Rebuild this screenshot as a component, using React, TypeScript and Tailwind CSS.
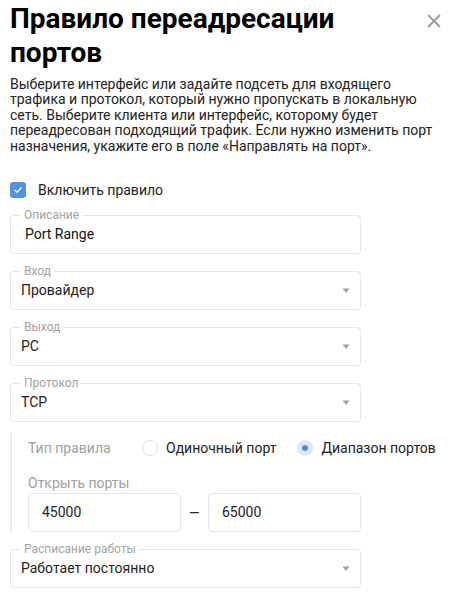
import React from 'react';

const SelectField = ({ label, value }: { label: string; value: string }) => (
  <div className="relative h-[39px] w-[351px] rounded-[4px] border border-[#e6e6e6] flex items-center pl-[10px] pr-[10px]">
    <span className="absolute left-[10px] top-[-8px] bg-white px-[3px] text-[12px] leading-[14px] text-[#a3a3a3]">{label}</span>
    <span className="flex-1 text-[14px] text-[#222]">{value}</span>
    <svg width="8" height="6" viewBox="0 0 8 6">
      <path d="M0.5 0.5 H7.5 L4 5 Z" fill="#a0a0a0" />
    </svg>
  </div>
);

const App = () => (
  <div className="w-[452px] h-[598px] bg-white overflow-hidden font-['Roboto',sans-serif] text-[#222] px-[10px] pt-[2px]">
    {/* Header */}
    <div className="flex items-start justify-between">
      <h1 className="text-[28px] leading-[34px] font-bold text-black">
        Правило переадресации
        <br />
        портов
      </h1>
      <button className="mt-[11px] text-[#9a9a9a]">
        <svg width="16" height="16" viewBox="0 0 16 16">
          <path d="M2 2 L14 14 M14 2 L2 14" stroke="currentColor" strokeWidth="1.8" />
        </svg>
      </button>
    </div>

    <p className="mt-[7px] text-[14px] leading-[15.4px] text-[#222]">
      Выберите интерфейс или задайте подсеть для входящего трафика и протокол, который нужно пропускать в локальную сеть. Выберите клиента или интерфейс, которому будет переадресован подходящий трафик. Если нужно изменить порт назначения, укажите его в поле «Направлять на порт».
    </p>

    {/* Enable */}
    <label className="mt-[26px] flex items-center h-[20px] gap-[12px]">
      <span className="w-[16px] h-[16px] rounded-[3px] bg-[#5294e2] flex items-center justify-center">
        <svg width="10" height="8" viewBox="0 0 10 8">
          <path d="M1.5 4 L4 6.3 L8.5 1.5" stroke="white" strokeWidth="1.2" fill="none" />
        </svg>
      </span>
      <span className="text-[14px] text-[#222]">Включить правило</span>
    </label>

    <div className="mt-[15px] flex flex-col gap-[17px]">
      <div className="relative h-[39px] w-[351px] rounded-[4px] border border-[#e6e6e6] flex items-center pl-[14px]">
        <span className="absolute left-[10px] top-[-8px] bg-white px-[3px] text-[12px] leading-[14px] text-[#a3a3a3]">Описание</span>
        <span className="text-[14px] text-[#111]">Port Range</span>
      </div>
      <SelectField label="Вход" value="Провайдер" />
      <SelectField label="Выход" value="PC" />
      <SelectField label="Протокол" value="TCP" />
    </div>

    {/* Rule type */}
    <div className="mt-[11px] border-l-[2px] border-[#ebebeb] pl-[16px] pt-[5px] w-fit">
      <div className="flex items-center h-[20px] text-[14px] whitespace-nowrap">
        <span className="w-[114px] text-[#a0a0a0]">Тип правила</span>
        <span className="w-[16px] h-[16px] rounded-full border border-[#dcdcdc]" />
        <span className="ml-[8px] text-[#222]">Одиночный порт</span>
        <span className="ml-[21px] w-[16px] h-[16px] rounded-full bg-[#dde9f8] flex items-center justify-center">
          <span className="w-[6px] h-[6px] rounded-full bg-[#4a90e2]" />
        </span>
        <span className="ml-[8px] text-[#222]">Диапазон портов</span>
      </div>
      <div className="mt-[15px] h-[20px] flex items-center text-[14px] text-[#a0a0a0]">Открыть порты</div>
      <div className="flex items-center">
        <div className="h-[39px] w-[153px] rounded-[4px] border border-[#e6e6e6] flex items-center pl-[13px] text-[14px]">45000</div>
        <div className="w-[27px] flex justify-center text-[18px] leading-[20px] text-[#222]">–</div>
        <div className="h-[39px] w-[153px] rounded-[4px] border border-[#e6e6e6] flex items-center pl-[13px] text-[14px]">65000</div>
      </div>
    </div>

    <div className="mt-[17px]">
      <SelectField label="Расписание работы" value="Работает постоянно" />
    </div>
  </div>
);

export default App;
